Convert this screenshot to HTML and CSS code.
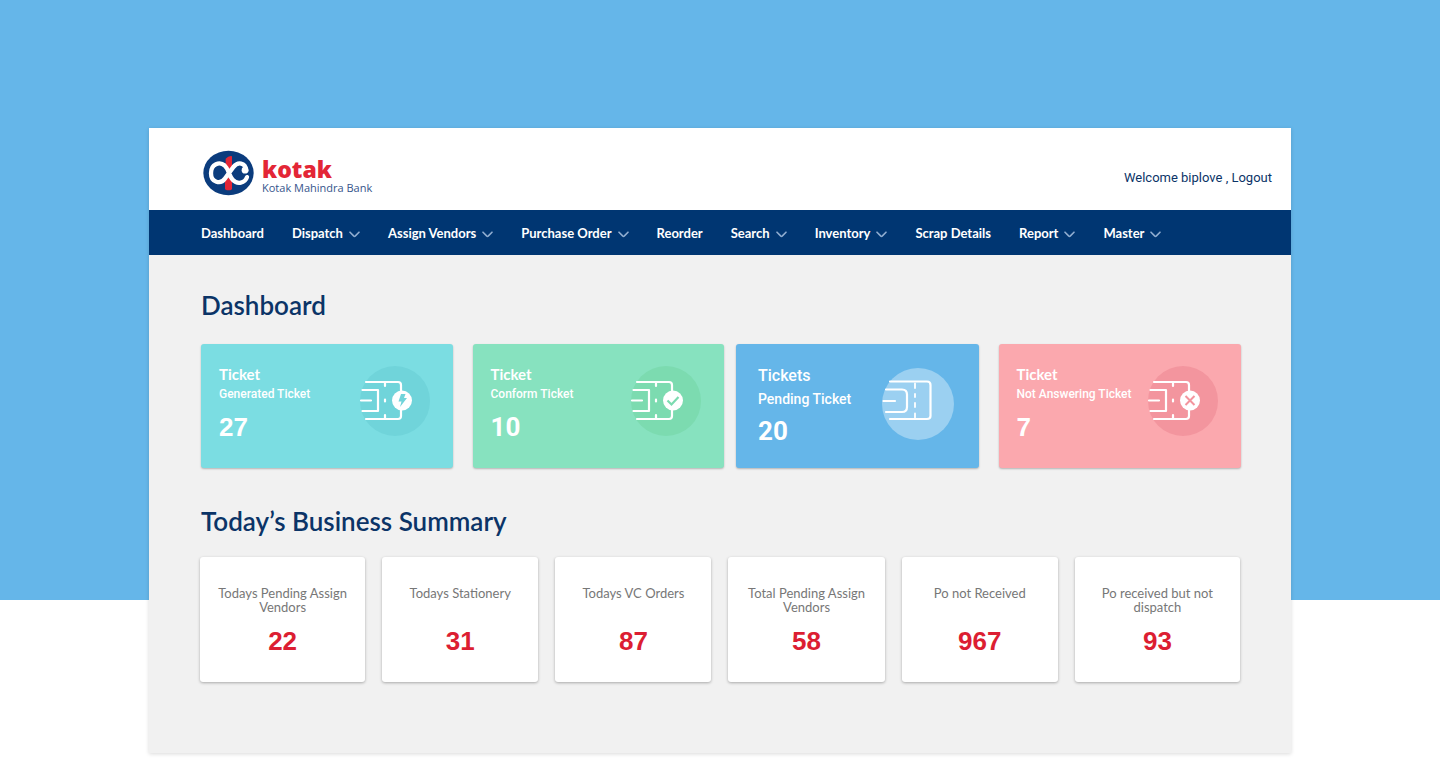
FILE: index.html
```html
<!DOCTYPE html>
<html lang="en">
<head>
<meta charset="utf-8">
<meta name="viewport" content="width=device-width, initial-scale=1">
<title>Dashboard</title>
<link rel="stylesheet" href="styles.css">
</head>
<body>
<svg class="defs" aria-hidden="true">
  <symbol id="chevron" viewBox="0 0 11 7"><path d="M1 1.2 L4.6 4.9 Q5.5 5.7 6.4 4.9 L10 1.2" fill="none" stroke="currentColor" stroke-width="1.600" stroke-linecap="round"/></symbol>
  <symbol id="ticket" viewBox="0 0 72 72">
    <g fill="none" stroke="#fff" stroke-width="2.2" stroke-linecap="round" stroke-linejoin="round">
      <path d="M7 17H39Q42 17 42 20V51Q42 54 39 54H7M3.5 25H19V46H3.5M2 35.500H12M26 17.500V21M26 34.500V36.500M26 50V53.500"/>
    </g>
    <circle cx="43" cy="35.500" r="10" fill="#fff"/>
  </symbol>
</svg>
<div class="page">
  <div class="panel">
    <header class="header">
      <a class="brand" href="#">
        <svg class="brand-mark" viewBox="0 0 153 135" aria-hidden="true">
          <ellipse cx="76.500" cy="67.500" rx="75.500" ry="66.500" fill="#0b3c7d"/>
          <path d="M68 25Q77 15 87 17V59H68ZM66 80H87V116Q77 123 66 116Z" fill="#e32636"/>
          <path d="M130 60C127 35 104 33 91 50L66 84C53 103 24 96 24 68C24 40 50 32 65 45C78 57 77 75 89 88C103 103 126 98 132 80" fill="none" stroke="#fff" stroke-width="13" stroke-linecap="round"/>
          <circle cx="126" cy="59" r="10" fill="#fff"/>
        </svg>
        <span class="brand-text"><strong class="brand-name">kotak</strong><span class="brand-sub">Kotak Mahindra Bank</span></span>
      </a>
      <p class="account">Welcome biplove , <a href="#">Logout</a></p>
    </header>
    <nav class="nav">
      <a href="#">Dashboard</a>
      <a href="#">Dispatch<svg><use href="#chevron"/></svg></a>
      <a href="#">Assign Vendors<svg><use href="#chevron"/></svg></a>
      <a href="#">Purchase Order<svg><use href="#chevron"/></svg></a>
      <a href="#">Reorder</a>
      <a href="#">Search<svg><use href="#chevron"/></svg></a>
      <a href="#">Inventory<svg><use href="#chevron"/></svg></a>
      <a href="#">Scrap Details</a>
      <a href="#">Report<svg><use href="#chevron"/></svg></a>
      <a href="#">Master<svg><use href="#chevron"/></svg></a>
    </nav>
    <main class="main">
      <h1>Dashboard</h1>
      <div class="tickets">
        <div class="pair pair-wide">
          <section class="ticket teal">
            <div><h2>Ticket</h2><p>Generated Ticket</p><strong>27</strong></div>
            <svg class="ticket-icon" viewBox="0 0 72 72"><circle cx="36" cy="36" r="35" fill="#70d4da"/><use href="#ticket"/><path d="M42 29H46.500L45 33H48L41 42L42.500 36.500H39.500Z" fill="#70d4da"/></svg>
          </section>
          <section class="ticket green">
            <div><h2>Ticket</h2><p>Conform Ticket</p><strong class="roboto">10</strong></div>
            <svg class="ticket-icon" viewBox="0 0 72 72"><circle cx="36" cy="36" r="35" fill="#7cdbb0"/><use href="#ticket"/><path d="M37.500 35.500L41.500 39.500L48.500 32" fill="none" stroke="#7cdbb0" stroke-width="2.200"/></svg>
          </section>
        </div>
        <div class="pair pair-narrow">
          <section class="ticket blue">
            <div><h2>Tickets</h2><p>Pending Ticket</p><strong class="roboto">20</strong></div>
            <svg class="ticket-icon" viewBox="0 0 72 72"><circle cx="36" cy="36" r="36" fill="#9bd0f1"/><g fill="none" stroke="#fff" stroke-width="2.200" stroke-linecap="round"><path d="M8 13.500H45Q48.500 13.500 48.500 17V48Q48.500 51 45 51H8M4 21.500H20Q25 21.500 25 26.500V39Q25 44 20 44H4M1.500 33H13"/><path d="M33 15.500V20M33 26V29M33 35V39M33 45.500V49.500" stroke-width="1.800"/></g></svg>
          </section>
          <section class="ticket pink">
            <div><h2>Ticket</h2><p>Not Answering Ticket</p><strong>7</strong></div>
            <svg class="ticket-icon" viewBox="0 0 72 72"><circle cx="36" cy="36" r="35" fill="#f3959e"/><use href="#ticket"/><path d="M38.500 31L47.500 40M47.500 31L38.500 40" stroke="#f3959e" stroke-width="2"/></svg>
          </section>
        </div>
      </div>
      <h1>Today’s Business Summary</h1>
      <div class="summary">
        <section><h3>Todays Pending Assign Vendors</h3><strong>22</strong></section>
        <section><h3>Todays Stationery</h3><strong>31</strong></section>
        <section><h3>Todays VC Orders</h3><strong>87</strong></section>
        <section><h3>Total Pending Assign Vendors</h3><strong>58</strong></section>
        <section><h3>Po not Received</h3><strong>967</strong></section>
        <section><h3>Po received but not dispatch</h3><strong>93</strong></section>
      </div>
    </main>
  </div>
</div>
</body>
</html>
```
FILE: styles.css
```css
* { box-sizing: border-box; }
body { margin: 0; background: #fff; font-family: Lato, sans-serif; }
h1, h2, h3, p { margin: 0; }
a { color: inherit; text-decoration: none; }
.defs { display: none; }
.page { padding: 128px 149px 5px; background: linear-gradient(#65b6e9, #65b6e9) 0 0 / 100% 600px no-repeat; }
.panel { background: #f1f1f1; box-shadow: 0 1px 4px rgba(0, 0, 0, .15); }
.header { display: flex; justify-content: space-between; padding: 22px 19px 14px 54px; background: #fff; }
.brand { display: flex; gap: 8px; }
.brand-mark { width: 51px; height: 46px; }
.brand-text { display: flex; flex-direction: column; padding-top: 8px; font-family: "Open Sans", sans-serif; }
.brand-name { color: #e32636; font-size: 23px; font-weight: 800; line-height: 22px; }
.brand-sub { color: #36558c; font-size: 11px; line-height: 15px; }
.account { padding-top: 20px; color: #0b3467; font-family: Roboto, sans-serif; font-size: 13px; line-height: 16px; }
.nav { display: flex; align-items: center; gap: 28px; min-height: 45px; padding: 0 52px; background: #003672; color: #fff; font-size: 13px; font-weight: 700; line-height: 16px; }
.nav a { display: flex; align-items: center; gap: 6px; white-space: nowrap; }
.nav svg { width: 11px; height: 7px; margin-top: 3px; color: #8fadd0; }
.main { padding: 33px 51px 71px; }
h1 { padding-left: 1px; color: #0b3467; font-size: 26px; font-weight: 600; line-height: 34px; }
.tickets { display: flex; gap: 12px; margin: 22px -1px 36px 1px; }
.pair { display: grid; grid-template-columns: 1fr 1fr; gap: 20px; }
.pair-wide { flex: 523 1 0; }
.pair-narrow { flex: 505 1 0; }
.ticket { display: flex; justify-content: space-between; min-height: 124px; padding: 21px 22px 18px 18px; border-radius: 3px; color: #fff; box-shadow: 0 1px 2px rgba(0, 0, 0, .25); }
.teal { background: #7bdde2; }
.green { background: #87e2bf; }
.blue { background: #65b6e9; }
.pink { background: #fba8ae; }
.ticket h2 { font-size: 15px; font-weight: 700; line-height: 18px; }
.ticket p { font-family: Roboto, sans-serif; font-size: 12px; font-weight: 500; line-height: 22px; white-space: nowrap; }
.ticket strong { display: block; padding-top: 7px; font-family: "Liberation Sans", Arial, sans-serif; font-size: 26px; line-height: 30px; }
.ticket .roboto { font-family: Roboto, sans-serif; }
.ticket-icon { flex: none; width: 72px; height: 72px; }
.ticket.blue { padding: 22px 25px 18px 22px; }
.ticket.blue h2 { font: 500 16px/20px Roboto, sans-serif; }
.blue p { padding-top: 1px; font-size: 14px; line-height: 24px; }
.ticket.blue strong { padding-top: 5px; }
.blue .ticket-icon { margin-top: 2px; }
.summary { display: grid; grid-template-columns: 165fr 156fr 156fr 156fr 156fr 165fr; gap: 17px; margin-top: 19px; }
.summary section { min-height: 125px; padding: 29px 14px 20px; border-radius: 3px; background: #fff; box-shadow: 0 1px 3px rgba(0, 0, 0, .3); text-align: center; }
.summary h3 { min-height: 28px; color: #777; font-size: 13px; font-weight: 400; line-height: 14px; }
.summary strong { display: block; margin-top: 12px; color: #dc1e32; font-family: "Liberation Sans", Arial, sans-serif; font-size: 26px; line-height: 30px; }
```
